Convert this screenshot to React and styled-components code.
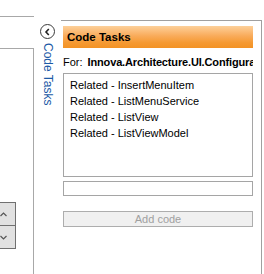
import React from "react";
import styled, { createGlobalStyle } from "styled-components";

const Global = createGlobalStyle`
  html, body { margin: 0; padding: 0; background: #fff; }
  body { width: 264px; height: 274px; overflow: hidden; font-family: "Liberation Sans", Arial, sans-serif; font-size: 11px; color: #000; }
  #root { height: 274px; }
`;

const Page = styled.div`
  display: flex;
  height: 274px;
  width: 264px;
`;

const LeftArea = styled.div`
  width: 34px;
  flex: none;
  display: flex;
  flex-direction: column;
  padding-top: 16px;
`;

const TopLine = styled.div`
  height: 0;
  border-top: 1px solid #a8a8a8;
`;

const LeftBox = styled.div`
  margin-top: 31px;
  flex: 1;
  border-top: 1px solid #a8a8a8;
  border-right: 1px solid #a8a8a8;
  display: flex;
  flex-direction: column;
  padding-top: 153px;
`;

const ScrollButtons = styled.div`
  display: flex;
  flex-direction: column;
  margin-left: -10px;
  width: 26px;
`;

const ScrollBtn = styled.div`
  height: ${(p) => p.$h}px;
  box-sizing: border-box;
  background: #e1e1e1;
  border: 1px solid #707070;
  margin-top: ${(p) => (p.$overlap ? -1 : 0)}px;
  display: flex;
  align-items: center;
  justify-content: center;
`;

const SideTab = styled.div`
  width: 27px;
  flex: none;
  display: flex;
  flex-direction: column;
  align-items: center;
  padding-top: 24px;
`;

const CircleBtn = styled.div`
  width: 15px;
  height: 15px;
  box-sizing: border-box;
  border: 1.5px solid #3a3a3a;
  border-radius: 50%;
  display: flex;
  align-items: center;
  justify-content: center;
`;

const VerticalLabel = styled.div`
  writing-mode: vertical-rl;
  margin-top: 4px;
  margin-left: 1px;
  font-size: 12px;
  color: #1c5aa6;
  white-space: nowrap;
`;

const RightPanel = styled.div`
  margin-top: 20px;
  width: 201px;
  flex: none;
  box-sizing: border-box;
  border-top: 1px solid #a0a0a0;
  border-right: 1px solid #a0a0a0;
  padding: 5px 8px 0 2px;
  display: flex;
  flex-direction: column;
`;

const Header = styled.div`
  height: 22px;
  box-sizing: border-box;
  padding-left: 4px;
  display: flex;
  align-items: center;
  font-weight: bold;
  font-size: 11.5px;
  color: #000;
  background: linear-gradient(to bottom, #fdd09a 0%, #f9ab5a 45%, #f59a33 75%, #f39224 100%);
`;

const ForRow = styled.div`
  height: 25px;
  display: flex;
  align-items: center;
  white-space: nowrap;
  overflow: hidden;
  padding-top: 2px;
  box-sizing: border-box;
`;

const ForLabel = styled.span`
  margin-right: 5px;
`;

const ForValue = styled.span`
  font-weight: bold;
  letter-spacing: -0.15px;
`;

const ListBox = styled.div`
  height: 104px;
  box-sizing: border-box;
  border: 1px solid #a5a5a5;
  padding: 3px 6px;
  display: flex;
  flex-direction: column;
`;

const ListItem = styled.div`
  line-height: 16px;
  height: 16px;
  white-space: nowrap;
`;

const TextInput = styled.div`
  margin-top: 4px;
  height: 15px;
  box-sizing: border-box;
  border: 1px solid #a5a5a5;
  background: #fff;
`;

const AddButton = styled.div`
  margin-top: 15px;
  height: 16px;
  box-sizing: border-box;
  border: 1px solid #adadad;
  background: #f0f0f0;
  color: #a0a0a0;
  display: flex;
  align-items: center;
  justify-content: center;
  font-size: 11px;
`;

const items = [
  "Related - InsertMenuItem",
  "Related - ListMenuService",
  "Related - ListView",
  "Related - ListViewModel",
];

export default function App() {
  return (
    <>
      <Global />
      <Page>
        <LeftArea>
          <TopLine />
          <LeftBox>
            <ScrollButtons>
              <ScrollBtn $h={24}>
                <svg width="7" height="5" viewBox="0 0 7 5">
                  <path d="M0.5 4 L3.5 1 L6.5 4" fill="none" stroke="#555" strokeWidth="1.2" />
                </svg>
              </ScrollBtn>
              <ScrollBtn $h={24} $overlap>
                <svg width="7" height="5" viewBox="0 0 7 5">
                  <path d="M0.5 1 L3.5 4 L6.5 1" fill="none" stroke="#555" strokeWidth="1.2" />
                </svg>
              </ScrollBtn>
            </ScrollButtons>
          </LeftBox>
        </LeftArea>
        <SideTab>
          <CircleBtn>
            <svg width="7" height="8" viewBox="0 0 7 8">
              <path d="M4.8 1 L2 4 L4.8 7" fill="none" stroke="#222" strokeWidth="1.6" />
            </svg>
          </CircleBtn>
          <VerticalLabel>Code Tasks</VerticalLabel>
        </SideTab>
        <RightPanel>
          <Header>Code Tasks</Header>
          <ForRow>
            <ForLabel>For:</ForLabel>
            <ForValue>Innova.Architecture.UI.Configura</ForValue>
          </ForRow>
          <ListBox>
            {items.map((t) => (
              <ListItem key={t}>{t}</ListItem>
            ))}
          </ListBox>
          <TextInput />
          <AddButton>Add code</AddButton>
        </RightPanel>
      </Page>
    </>
  );
}
